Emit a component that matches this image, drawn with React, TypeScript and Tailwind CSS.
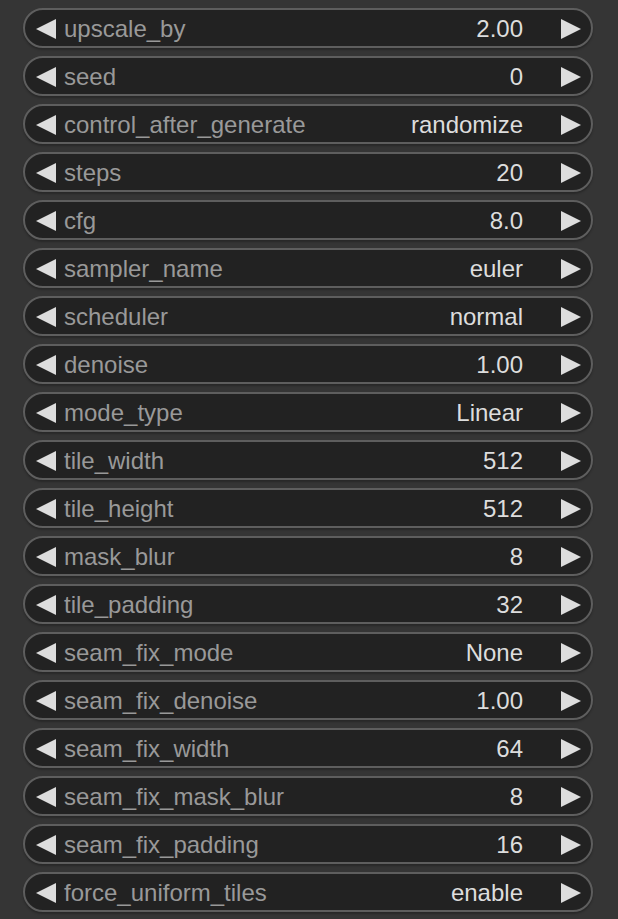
const widgets: [string, string][] = [
  ['upscale_by', '2.00'],
  ['seed', '0'],
  ['control_after_generate', 'randomize'],
  ['steps', '20'],
  ['cfg', '8.0'],
  ['sampler_name', 'euler'],
  ['scheduler', 'normal'],
  ['denoise', '1.00'],
  ['mode_type', 'Linear'],
  ['tile_width', '512'],
  ['tile_height', '512'],
  ['mask_blur', '8'],
  ['tile_padding', '32'],
  ['seam_fix_mode', 'None'],
  ['seam_fix_denoise', '1.00'],
  ['seam_fix_width', '64'],
  ['seam_fix_mask_blur', '8'],
  ['seam_fix_padding', '16'],
  ['force_uniform_tiles', 'enable'],
];

function Arrow({ dir }: { dir: 'left' | 'right' }) {
  return (
    <svg width="20" height="20" viewBox="0 0 20 20" className="mt-[1px] shrink-0">
      {dir === 'left' ? (
        <polygon points="20,0 20,20 0,10" fill="#dddddd" />
      ) : (
        <polygon points="0,0 0,20 20,10" fill="#dddddd" />
      )}
    </svg>
  );
}

function WidgetRow({ name, value }: { name: string; value: string }) {
  return (
    <div className="flex h-[40px] w-[570px] items-center rounded-full border-2 border-[#5e5e5e] bg-[#222222] pl-[11px] pr-[10px] shadow-[0_2px_2px_rgba(0,0,0,0.25)]">
      <Arrow dir="left" />
      <span className="ml-[8px] flex-1 whitespace-nowrap pt-[2px] leading-[30px] text-[#999999]">{name}</span>
      <span className="mr-[38px] whitespace-nowrap pt-[2px] leading-[30px] text-[#dddddd]">{value}</span>
      <Arrow dir="right" />
    </div>
  );
}

export default function App() {
  return (
    <div
      className="min-h-[919px] w-[618px] bg-[#353535] pl-[23px] pt-[8px] text-[24px]"
      style={{ fontFamily: '"Liberation Sans", Arial, sans-serif' }}
    >
      <div className="flex flex-col gap-[8px]">
        {widgets.map(([n, v]) => (
          <WidgetRow key={n} name={n} value={v} />
        ))}
      </div>
    </div>
  );
}
